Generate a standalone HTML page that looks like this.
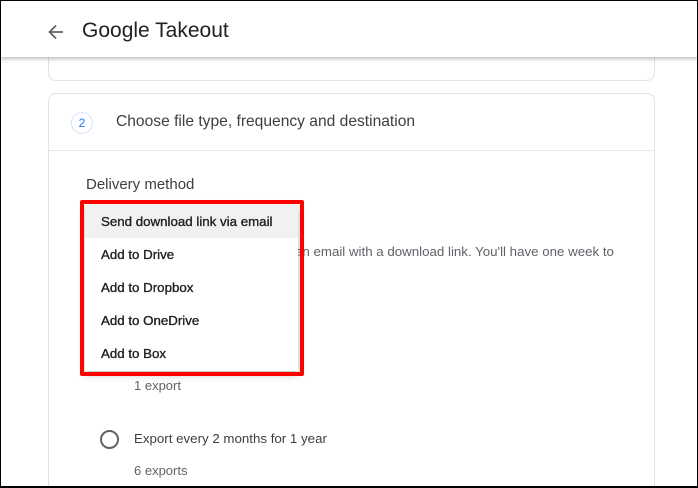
<!DOCTYPE html>
<html style="overflow:hidden;width:698px;height:488px"><head><style>
*{margin:0;padding:0;box-sizing:border-box}
body{width:698px;height:488px;overflow:hidden;background:#fff;font-family:"Liberation Sans",Arial,sans-serif;position:relative;color:#202124}
.frame{position:absolute;left:0;top:0;width:698px;height:488px;border:1px solid #000;border-bottom-width:2px;z-index:50;pointer-events:none}
.hdr{position:absolute;left:0;top:0;width:698px;height:57px;background:#fff;box-shadow:0 2px 4px rgba(0,0,0,.25);z-index:10}
.hdr .t{position:absolute;left:82px;top:19px;font-size:21px;color:#202124}
.card{position:absolute;left:48px;width:607px;border:1px solid #e3e3e3;border-radius:8px;background:#fff;overflow:hidden}
.abs{position:absolute;white-space:nowrap}
.menu{position:absolute;left:85px;top:205px;width:213px;height:166px;background:#fff;box-shadow:0 3px 8px rgba(0,0,0,.3);z-index:5}
.menu div{height:33px;line-height:33px;padding-left:16px;font-size:13.3px;color:#202124;-webkit-text-stroke:0.35px #202124}
.red{position:absolute;left:80px;top:200px;width:224px;height:176px;border:4px solid #f00;border-radius:2px;z-index:6}
</style></head><body>
<div class="frame"></div>
<div class="hdr">
<svg class="abs" style="left:47px;top:23px" width="18" height="18" viewBox="0 0 18 18"><path d="M16 9H3M9 2.5L2.5 9 9 15.5" stroke="#5f6368" stroke-width="1.8" fill="none"/></svg>
<div class="t">Google Takeout</div>
</div>
<div class="card" style="top:-20px;height:101px"></div>
<div class="card" style="top:93px;height:395px;border-bottom:none;border-radius:8px 8px 0 0">
<div class="abs" style="left:22px;top:18px;width:22px;height:22px;border:1px solid #d2e3fc;border-radius:50%;color:#1a73e8;font-size:12px;text-align:center;line-height:20px">2</div>
<div class="abs" style="left:67px;top:19px;font-size:15.6px;color:#3c4043">Choose file type, frequency and destination</div>
<div class="abs" style="left:0;top:56px;width:605px;border-top:1px solid #e8e8e8"></div>
<div class="abs" style="left:37px;top:82px;font-size:15px;color:#3c4043">Delivery method</div>
<div class="abs" style="left:246px;top:150px;font-size:13.3px;color:#5f6368">an email with a download link. You'll have one week to</div>
<div class="abs" style="left:85px;top:284px;font-size:13px;color:#5f6368">1 export</div>
<div class="abs" style="left:51px;top:336px;width:19px;height:19px;border:2px solid #5f6368;border-radius:50%"></div>
<div class="abs" style="left:85px;top:337px;font-size:13.3px;color:#3c4043">Export every 2 months for 1 year</div>
<div class="abs" style="left:85px;top:369px;font-size:13px;color:#5f6368">6 exports</div>
</div>
<div class="menu">
<div style="background:#f1f1f1">Send download link via email</div>
<div>Add to Drive</div>
<div>Add to Dropbox</div>
<div>Add to OneDrive</div>
<div>Add to Box</div>
</div>
<div class="red"></div>
</body></html>
